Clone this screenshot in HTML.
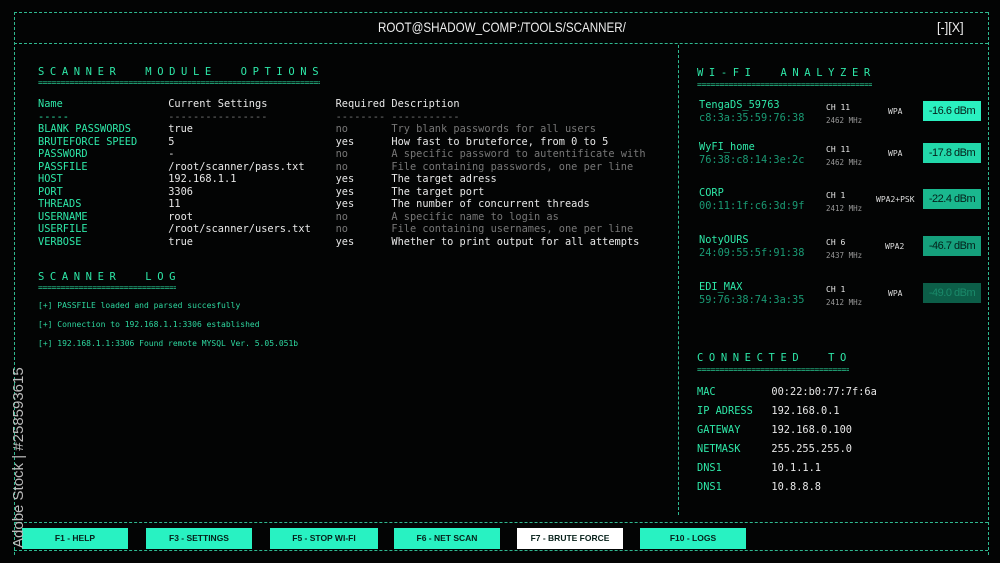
<!DOCTYPE html>
<html><head><meta charset="utf-8"><style>
*{margin:0;padding:0;box-sizing:border-box}
body{width:1000px;height:563px;background:#030404;overflow:hidden;position:relative;font-family:"DejaVu Sans Mono","Liberation Mono",monospace;font-size:10.3px;color:#e8e8e8}
.a{position:absolute;white-space:pre}
.g{color:#2ee8a8}
.d{color:#777}
.h{border-top:1px dashed #2fb890;position:absolute;height:0}
.v{border-left:1px dashed #2fb890;position:absolute;width:0}
.t{color:#2ee8a8;letter-spacing:5.6px;font-size:10.5px}
.eq{color:#2ee8a8;font-size:8px;letter-spacing:-0.3px;overflow:hidden;height:10px}
.btn{position:absolute;top:528px;height:21px;background:#28f2c2;color:#06201a;font-size:8.5px;font-weight:bold;text-align:center;line-height:21px;font-family:"Liberation Sans",sans-serif;white-space:nowrap}
.db{position:absolute;left:923px;width:58px;height:20px;font-size:11px;text-align:center;line-height:20px;color:#04201a;white-space:nowrap;letter-spacing:-0.5px;font-family:"Liberation Sans",sans-serif}
.sm{font-size:7.5px;color:#999}
.wp{font-size:8px;color:#ddd}
</style></head><body>
<div class="h" style="left:14px;top:12px;width:974px"></div>
<div class="h" style="left:14px;top:43px;width:974px"></div>
<div class="h" style="left:14px;top:522px;width:974px"></div>
<div class="h" style="left:14px;top:550px;width:974px"></div>
<div class="v" style="left:14px;top:12px;height:543px"></div>
<div class="v" style="left:988px;top:12px;height:543px"></div>
<div class="v" style="left:678px;top:45px;height:470px"></div>
<div class="a" style="left:378px;top:19px;font-family:'Liberation Sans',sans-serif;font-size:14px;color:#eee;transform:scaleX(0.83);transform-origin:0 0">ROOT@SHADOW_COMP:/TOOLS/SCANNER/</div>
<div class="a" style="left:937px;top:19px;font-family:'Liberation Sans',sans-serif;font-size:14px;color:#eee;transform:scaleX(0.9);transform-origin:0 0">[-][X]</div>

<div class="a t" style="left:38px;top:66px">SCANNER  MODULE  OPTIONS</div>
<div class="a eq" style="left:38px;top:78px;width:282px">================================================================================</div>
<div class="a" style="left:38px;top:98px;line-height:12.5px"><span class="g">Name</span>                 Current Settings           Required Description
<span class="g">-----</span>                <span class="d">----------------</span>           <span class="d">-------- -----------</span>
<span class="g">BLANK PASSWORDS</span>      true                       <span class="d">no       Try blank passwords for all users</span>
<span class="g">BRUTEFORCE SPEED</span>     5                          yes      How fast to bruteforce, from 0 to 5
<span class="g">PASSWORD</span>             -                          <span class="d">no       A specific password to autentificate with</span>
<span class="g">PASSFILE</span>             /root/scanner/pass.txt     <span class="d">no       File containing passwords, one per line</span>
<span class="g">HOST</span>                 192.168.1.1                yes      The target adress
<span class="g">PORT</span>                 3306                       yes      The target port
<span class="g">THREADS</span>              11                         yes      The number of concurrent threads
<span class="g">USERNAME</span>             root                       <span class="d">no       A specific name to login as</span>
<span class="g">USERFILE</span>             /root/scanner/users.txt    <span class="d">no       File containing usernames, one per line</span>
<span class="g">VERBOSE</span>              true                       yes      Whether to print output for all attempts</div>

<div class="a t" style="left:38px;top:271px">SCANNER  LOG</div>
<div class="a eq" style="left:38px;top:283px;width:138px">==================================</div>
<div class="a g" style="left:38px;top:296px;font-size:8px;line-height:19px;color:#2ed8a0">[+] PASSFILE loaded and parsed succesfully
[+] Connection to 192.168.1.1:3306 established
[+] 192.168.1.1:3306 Found remote MYSQL Ver. 5.05.051b</div>

<div class="a t" style="left:697px;top:67px">WI-FI  ANALYZER</div>
<div class="a eq" style="left:697px;top:80px;width:175px">==================================================</div>

<div class="a g" style="left:699px;top:99px;line-height:13px">TengaDS_59763
<span style="color:#1a9a74">c8:3a:35:59:76:38</span></div>
<div class="a" style="left:826px;top:101px;font-size:8px;line-height:13px">CH 11
<span class="sm">2462 MHz</span></div>
<div class="a wp" style="left:888px;top:107px">WPA</div>
<div class="db" style="top:101px;background:#2af0c0">-16.6 dBm</div>

<div class="a g" style="left:699px;top:141px;line-height:13px">WyFI_home
<span style="color:#1a9a74">76:38:c8:14:3e:2c</span></div>
<div class="a" style="left:826px;top:143px;font-size:8px;line-height:13px">CH 11
<span class="sm">2462 MHz</span></div>
<div class="a wp" style="left:888px;top:149px">WPA</div>
<div class="db" style="top:143px;background:#22d8aa">-17.8 dBm</div>

<div class="a g" style="left:699px;top:187px;line-height:13px">CORP
<span style="color:#1a9a74">00:11:1f:c6:3d:9f</span></div>
<div class="a" style="left:826px;top:189px;font-size:8px;line-height:13px">CH 1
<span class="sm">2412 MHz</span></div>
<div class="a wp" style="left:876px;top:195px">WPA2+PSK</div>
<div class="db" style="top:189px;background:#1ab88e">-22.4 dBm</div>

<div class="a g" style="left:699px;top:234px;line-height:13px">NotyOURS
<span style="color:#1a9a74">24:09:55:5f:91:38</span></div>
<div class="a" style="left:826px;top:236px;font-size:8px;line-height:13px">CH 6
<span class="sm">2437 MHz</span></div>
<div class="a wp" style="left:885px;top:242px">WPA2</div>
<div class="db" style="top:236px;background:#15a07c">-46.7 dBm</div>

<div class="a g" style="left:699px;top:281px;line-height:13px">EDI_MAX
<span style="color:#1a9a74">59:76:38:74:3a:35</span></div>
<div class="a" style="left:826px;top:283px;font-size:8px;line-height:13px">CH 1
<span class="sm">2412 MHz</span></div>
<div class="a wp" style="left:888px;top:289px">WPA</div>
<div class="db" style="top:283px;background:#0c5e48;color:#1a8a6a">-49.0 dBm</div>

<div class="a t" style="left:697px;top:352px">CONNECTED  TO</div>
<div class="a eq" style="left:697px;top:365px;width:152px">=============================================</div>
<div class="a" style="left:697px;top:383px;line-height:19px"><span class="g">MAC</span>         00:22:b0:77:7f:6a
<span class="g">IP ADRESS</span>   192.168.0.1
<span class="g">GATEWAY</span>     192.168.0.100
<span class="g">NETMASK</span>     255.255.255.0
<span class="g">DNS1</span>        10.1.1.1
<span class="g">DNS1</span>        10.8.8.8</div>

<div class="btn" style="left:22px;width:106px">F1 - HELP</div>
<div class="btn" style="left:146px;width:106px">F3 - SETTINGS</div>
<div class="btn" style="left:270px;width:108px">F5 - STOP WI-FI</div>
<div class="btn" style="left:394px;width:106px">F6 - NET SCAN</div>
<div class="btn" style="left:517px;width:106px;background:#fff">F7 - BRUTE FORCE</div>
<div class="btn" style="left:640px;width:106px">F10 - LOGS</div>

<div class="a" style="left:10px;top:548px;transform:rotate(-90deg);transform-origin:0 0;font-family:'Liberation Sans',sans-serif;font-size:15px;color:#bbb">Adobe Stock | #258593615</div>
</body></html>
